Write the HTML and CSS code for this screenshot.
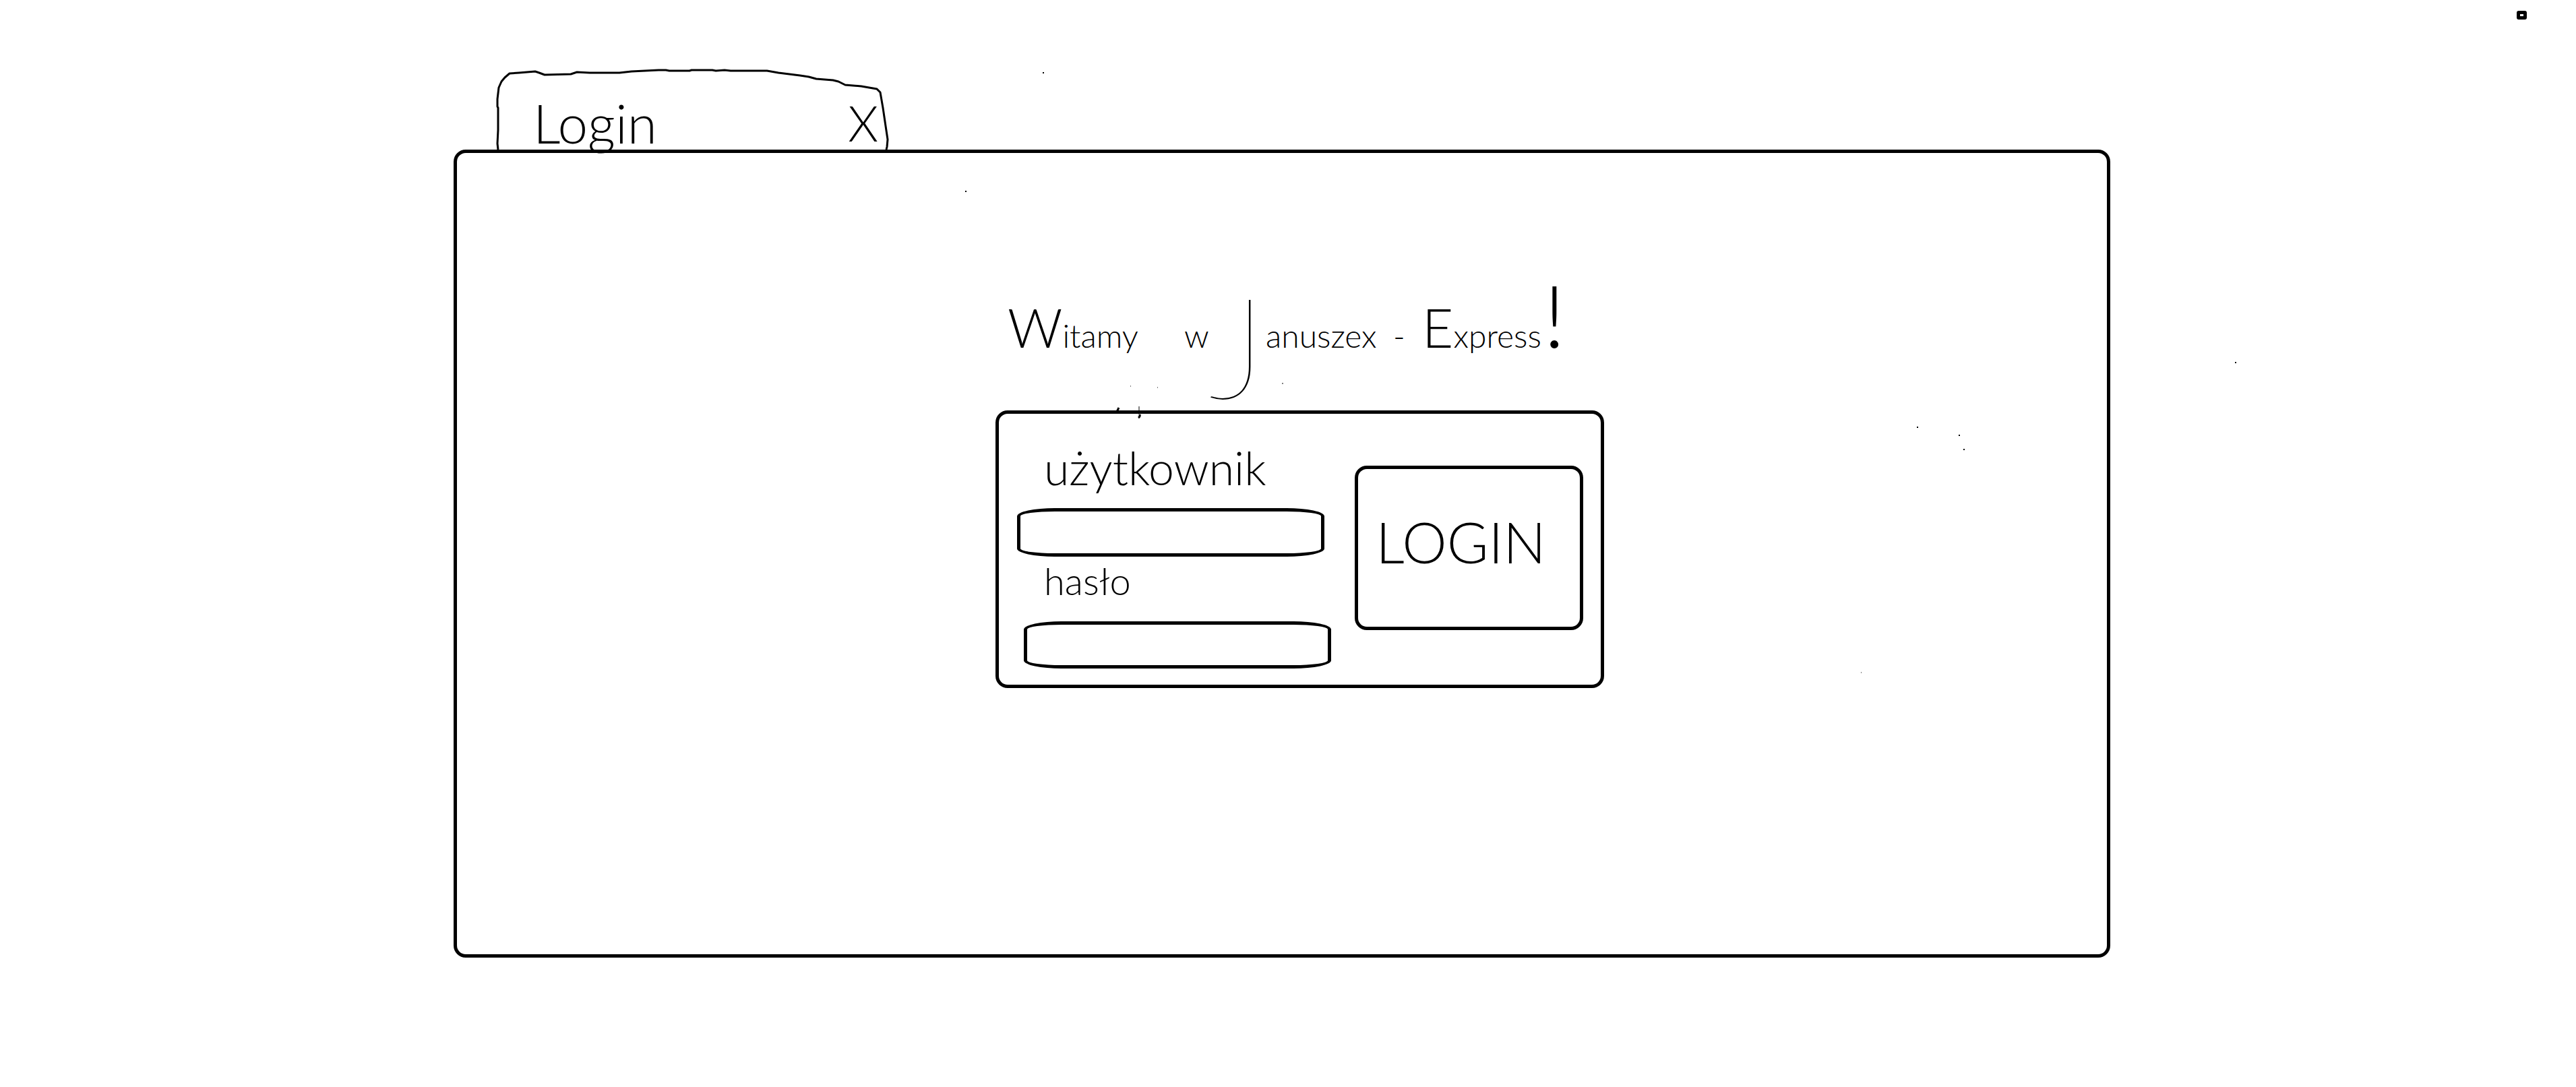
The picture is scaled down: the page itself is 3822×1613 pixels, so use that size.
FILE: index.html
```
<!DOCTYPE html>
<html lang="pl">
<head>
<meta charset="utf-8">
<title>Januszex - Express</title>
<meta name="viewport" content="width=device-width, initial-scale=1">
<link rel="stylesheet" href="styles.css">
</head>
<body>
<div class="corner-mark"></div>
<div class="page">
  <!-- Stray pen marks -->
  <svg class="specks" viewBox="0 0 3822 1613" aria-hidden="true">
    <path class="speck" d="M1547 108h2M1432 284h2M2844 634h2M2906 646h2M2913 667h2M3316 538h2"/>
    <path class="speck-fine" d="M2761 998h1M1677 573h1M1717 575h1M1902 569h2"/>
    <path class="tick" d="M1660 605L1656 613M1691 615Q1692 618 1689 620"/>
    <path class="speck-fine" d="M1690 603V615"/>
  </svg>
  <header class="tab">
    <svg class="tab-outline" viewBox="0 0 584 122" aria-hidden="true">
      <path d="M4 122L3 113L4 93V60L3 58V47L5 30L9 21L14 15L21 9L35 8L59 6L65 8L73 11L112 10L121 7L140 8H184L202 6L242 4H253L258 5H288L291 4H322L327 5L340 4L349 5H403L420 8L452 12L465 14L476 17L501 19L509 21L519 26L543 28L566 32L571 37L575 60L579 87L582 107L581 118L580 122"/>
    </svg>
    <span class="tab-title">Login</span>
    <button class="tab-close" type="button" aria-label="Zamknij">X</button>
  </header>
  <main class="panel">
    <section class="welcome">
      <h1 class="heading">
        <span><span class="capital">W</span>itamy</span>
        <span>w</span>
        <span class="heading-j">J</span>
        <span>anuszex</span>
        <span>-</span>
        <span><span class="capital">E</span>xpress</span>
        <span class="heading-mark">!</span>
      </h1>
      <form class="card">
        <div class="fields">
          <label class="label" for="user">użytkownik</label>
          <input class="input" id="user" type="text">
          <label class="label label-pass" for="pass">hasło</label>
          <input class="input input-pass" id="pass" type="password">
        </div>
        <button class="submit" type="submit">LOGIN</button>
      </form>
    </section>
  </main>
</div>
</body>
</html>
```
FILE: styles.css
```
* { box-sizing: border-box; }

body {
  margin: 0;
  background: #fff;
  color: #000;
  font-family: Lato, "Liberation Sans", sans-serif;
  font-weight: 300;
}

.corner-mark {
  position: absolute;
  top: 16px;
  right: 73px;
  width: 15px;
  height: 13px;
  border: 5px solid #000;
  border-radius: 3px;
}

.page {
  position: relative;
  display: grid;
  grid-template-columns: 673fr 2458fr 691fr;
  padding: 100px 0 192px;
}

.specks {
  position: absolute;
  top: 0;
  left: 0;
  width: 100%;
  pointer-events: none;
  fill: none;
  stroke: #000;
}

.speck { stroke-width: 2; }
.speck-fine { stroke-width: 1; }
.tick { stroke-width: 3; }

.tab {
  grid-column: 2;
  position: relative;
  display: flex;
  align-items: flex-end;
  justify-content: space-between;
  width: 584px;
  height: 122px;
  margin-left: 62px;
  padding: 0 16px 0 56px;
}

.tab-outline {
  position: absolute;
  inset: 0;
  width: 100%;
  height: 100%;
  overflow: visible;
  fill: none;
  stroke: #000;
  stroke-width: 3;
  stroke-linejoin: round;
}

.tab-title { font-size: 80px; line-height: 80px; }

.tab-close {
  border: 0;
  padding: 0;
  background: none;
  color: inherit;
  font: inherit;
  font-size: 72px;
  line-height: 80px;
}

.panel {
  grid-column: 2;
  display: grid;
  grid-template-columns: 799fr minmax(0, 903fr) 746fr;
  padding: 164px 0 395px;
  border: 5px solid #000;
  border-radius: 18px;
}

.welcome { grid-column: 2; }

.heading {
  display: grid;
  grid-template-columns: 262fr 38fr 83fr 189fr 43fr 180fr 90fr;
  align-items: baseline;
  height: 218px;
  margin: 0;
  padding-left: 18px;
  font-size: 48px;
  font-weight: 300;
  line-height: 152px;
  white-space: nowrap;
}

.heading > span { min-width: 0; }

.capital { font-size: 80px; }

.heading .heading-j {
  align-self: start;
  justify-self: end;
  font-size: 208px;
  font-weight: 100;
  line-height: 240px;
}

.heading-mark { font-size: 128px; }

.card {
  display: flex;
  align-items: flex-start;
  justify-content: space-between;
  padding: 44px 26px 24px 27px;
  border: 5px solid #000;
  border-radius: 18px;
}

.fields {
  display: flex;
  flex-direction: column;
  width: 466px;
}

.label {
  padding: 0 0 24px 40px;
  font-size: 68px;
  line-height: 72px;
}

.label-pass { font-size: 56px; }

.input {
  width: 456px;
  height: 72px;
  padding: 0 32px;
  border: 5px solid #000;
  border-radius: 56px / 12px;
  background: #fff;
  font: inherit;
  font-size: 32px;
}

.input-pass {
  align-self: flex-end;
  height: 70px;
}

.submit {
  width: 339px;
  height: 244px;
  margin-top: 33px;
  padding: 0 24px 20px 0;
  border: 5px solid #000;
  border-radius: 18px;
  background: #fff;
  color: inherit;
  font: inherit;
  font-size: 84px;
}
```
